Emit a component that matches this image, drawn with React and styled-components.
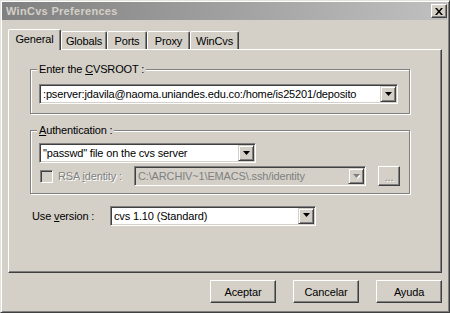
import React from 'react';
import styled, { createGlobalStyle } from 'styled-components';

const Global = createGlobalStyle`
  html, body { margin: 0; padding: 0; background: #d4d0c8; }
  body { font-family: "Liberation Sans", Arial, sans-serif; font-size: 11px; color: #000; }
  * { box-sizing: border-box; }
`;

const Window = styled.div`
  width: 450px;
  height: 313px;
  background: #d4d0c8;
  border: 1px solid;
  border-color: #e4e2dc #404040 #404040 #e4e2dc;
  box-shadow: inset 1px 1px 0 #fff, inset -1px -1px 0 #808080;
  padding: 1px 2px 2px 1px;
  display: flex;
  flex-direction: column;
`;

const TitleBar = styled.div`
  height: 18px;
  flex: none;
  display: flex;
  align-items: center;
  justify-content: space-between;
  padding: 0 0 0 4px;
  background: linear-gradient(to right, #808080, #c0c0c0);
`;

const Title = styled.span`
  font-weight: bold;
  font-size: 11px;
  color: #d4d0c8;
  letter-spacing: 0.3px;
`;

const CloseButton = styled.div`
  width: 16px;
  height: 14px;
  background: #d4d0c8;
  border: 1px solid;
  border-color: #fff #404040 #404040 #fff;
  box-shadow: inset -1px -1px 0 #808080;
  display: flex;
  align-items: center;
  justify-content: center;
`;

const Body = styled.div`
  flex: 1;
  display: flex;
  flex-direction: column;
  padding: 9px 5px 7px 6px;
  letter-spacing: -0.15px;
`;

const TabRow = styled.div`
  display: flex;
  align-items: flex-end;
  height: 20px;
  flex: none;
`;

const Tab = styled.div`
  width: ${p => p.$w}px;
  height: ${p => (p.$active ? 21 : 18)}px;
  margin-bottom: ${p => (p.$active ? -1 : 0)}px;
  padding-top: ${p => (p.$active ? 3 : 0)}px;
  position: relative;
  z-index: ${p => (p.$active ? 1 : 0)};
  background: #d4d0c8;
  border-top: 1px solid #fff;
  border-left: 1px solid #fff;
  border-right: 1px solid #404040;
  border-radius: 2px 2px 0 0;
  box-shadow: inset -1px 0 0 #808080;
  display: flex;
  justify-content: center;
  align-items: ${p => (p.$active ? 'flex-start' : 'center')};
  white-space: nowrap;
`;

const Panel = styled.div`
  flex: 1;
  display: flex;
  flex-direction: column;
  border: 1px solid;
  border-color: #fff #404040 #404040 #fff;
  box-shadow: inset -1px -1px 0 #808080;
  padding: 13px 31px 0 21px;
`;

const Group = styled.fieldset`
  margin: ${p => p.$mt || 0}px 0 0 0;
  min-width: 0;
  border: 1px solid #808080;
  box-shadow: inset 1px 1px 0 #fff, 1px 1px 0 #fff;
  padding: ${p => p.$pt}px 11px ${p => p.$pb}px 8px;
  display: flex;
  flex-direction: column;
  align-items: flex-start;
`;

const Legend = styled.legend`
  padding: 0 2px;
  margin-left: -2px;
  line-height: 13px;
  height: 13px;
  background: #d4d0c8;
`;

const Combo = styled.div`
  display: flex;
  width: ${p => (p.$w ? `${p.$w}px` : '100%')};
  height: 20px;
  flex: none;
  margin-bottom: ${p => p.$mb || 0}px;
  background: ${p => (p.$disabled ? '#d4d0c8' : '#fff')};
  border: 1px solid;
  border-color: #808080 #fff #fff #808080;
  box-shadow: inset 1px 1px 0 #404040, inset -1px -1px 0 #d4d0c8;
  padding: 1px;
`;

const ComboValue = styled.div`
  flex: 1;
  min-width: 0;
  line-height: 16px;
  padding-left: 2px;
  white-space: nowrap;
  overflow: hidden;
  color: ${p => (p.$disabled ? '#808080' : '#000')};
`;

const DropButton = styled.div`
  width: 16px;
  flex: none;
  background: #d4d0c8;
  border: 1px solid;
  border-color: #d4d0c8 #404040 #404040 #d4d0c8;
  box-shadow: inset 1px 1px 0 #fff, inset -1px -1px 0 #808080;
  display: flex;
  align-items: center;
  justify-content: center;
`;

const Row = styled.div`
  display: flex;
  align-items: center;
  height: ${p => p.$h || 20}px;
  margin-top: ${p => p.$mt || 0}px;
  margin-left: ${p => p.$ml || 0}px;
`;

const CheckBox = styled.div`
  width: 13px;
  height: 13px;
  flex: none;
  margin: 0 5px 0 1px;
  background: #d4d0c8;
  border: 1px solid;
  border-color: #808080 #fff #fff #808080;
  box-shadow: inset 1px 1px 0 #404040, inset -1px -1px 0 #d4d0c8;
`;

const Label = styled.span`
  width: ${p => p.$w}px;
  flex: none;
  white-space: nowrap;
  color: ${p => (p.$disabled ? '#808080' : '#000')};
  text-shadow: ${p => (p.$disabled ? '1px 1px 0 #fff' : 'none')};
`;

const SmallButton = styled.div`
  width: 22px;
  height: 20px;
  margin-left: 12px;
  flex: none;
  background: #d4d0c8;
  border: 1px solid;
  border-color: #fff #404040 #404040 #fff;
  box-shadow: inset -1px -1px 0 #808080;
  color: #808080;
  text-shadow: 1px 1px 0 #fff;
  display: flex;
  align-items: center;
  justify-content: center;
  line-height: 1;
  padding-top: 3px;
`;

const ButtonRow = styled.div`
  display: flex;
  justify-content: flex-end;
  gap: 17px;
  margin-top: 7px;
  flex: none;
`;

const PushButton = styled.button`
  width: 66px;
  height: 23px;
  padding: 0;
  font: inherit;
  letter-spacing: inherit;
  color: #000;
  background: #d4d0c8;
  border: 1px solid;
  border-color: #fff #404040 #404040 #fff;
  box-shadow: inset -1px -1px 0 #808080;
`;

const Arrow = ({ disabled }) => (
  <svg width="7" height="5" viewBox="0 0 7 5">
    {disabled && <polygon points="1,1 8,1 4.5,5" fill="#fff" />}
    <polygon points="0,0 7,0 3.5,4" fill={disabled ? '#808080' : '#000'} />
  </svg>
);

const ComboBox = ({ value, w, mb, disabled }) => (
  <Combo $w={w} $mb={mb} $disabled={disabled}>
    <ComboValue $disabled={disabled}>{value}</ComboValue>
    <DropButton>
      <Arrow disabled={disabled} />
    </DropButton>
  </Combo>
);

const u = (pre, ch, post) => (
  <>
    {pre}
    <u>{ch}</u>
    {post}
  </>
);

const tabs = [
  { label: 'General', w: 53, active: true },
  { label: 'Globals', w: 46 },
  { label: 'Ports', w: 40 },
  { label: 'Proxy', w: 43 },
  { label: 'WinCvs', w: 49 },
];

export default function App() {
  return (
    <>
      <Global />
      <Window>
        <TitleBar>
          <Title>WinCvs Preferences</Title>
          <CloseButton>
            <svg width="8" height="7" viewBox="0 0 8 7">
              <path d="M0 0h2l2 2.5L6 0h2L5 3.5 8 7H6L4 4.5 2 7H0l3-3.5z" fill="#000" />
            </svg>
          </CloseButton>
        </TitleBar>
        <Body>
          <TabRow>
            {tabs.map(t => (
              <Tab key={t.label} $w={t.w} $active={t.active}>
                {t.label}
              </Tab>
            ))}
          </TabRow>
          <Panel>
            <Group $pt={8} $pb={9}>
              <Legend>{u('Enter the ', 'C', 'VSROOT :')}</Legend>
              <ComboBox value=":pserver:jdavila@naoma.uniandes.edu.co:/home/is25201/deposito" />
            </Group>
            <Group $mt={10} $pt={6} $pb={7}>
              <Legend>{u('', 'A', 'uthentication :')}</Legend>
              <ComboBox value={'"passwd" file on the cvs server'} w={217} mb={3} />
              <Row>
                <CheckBox />
                <Label $w={76} $disabled>
                  RSA <u>i</u>dentity :
                </Label>
                <ComboBox value="C:\ARCHIV~1\EMACS\.ssh/identity" w={232} disabled />
                <SmallButton>...</SmallButton>
              </Row>
            </Group>
            <Row $mt={11} $ml={2} $h={21}>
              <Label $w={78}>{u('Use ', 'v', 'ersion :')}</Label>
              <ComboBox value="cvs 1.10 (Standard)" w={206} />
            </Row>
          </Panel>
          <ButtonRow>
            <PushButton>Aceptar</PushButton>
            <PushButton>Cancelar</PushButton>
            <PushButton>Ayuda</PushButton>
          </ButtonRow>
        </Body>
      </Window>
    </>
  );
}
